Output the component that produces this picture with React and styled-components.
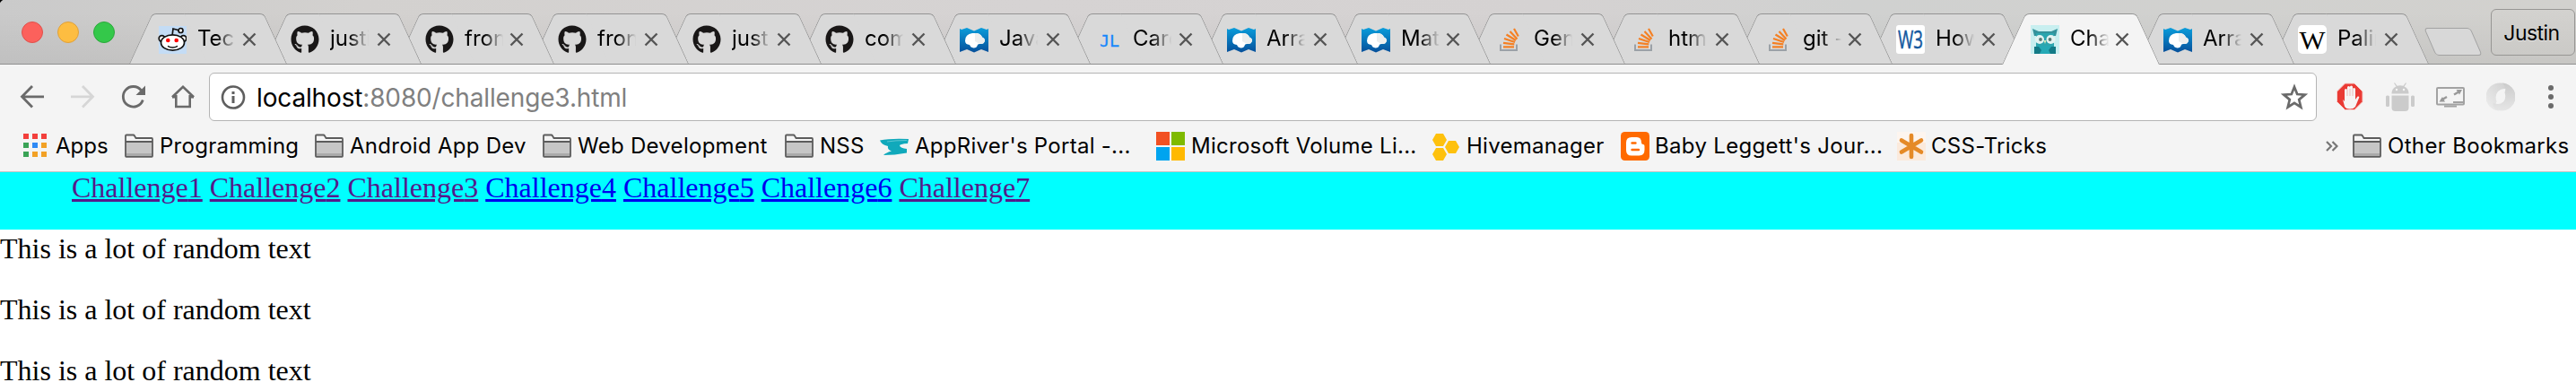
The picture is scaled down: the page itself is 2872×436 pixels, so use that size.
import React from 'react';
import styled, { createGlobalStyle, css } from 'styled-components';
import { FaGithub } from 'react-icons/fa';

const GlobalStyle = createGlobalStyle`
  * { box-sizing: border-box; }
  body { margin: 0; background: #fff; overflow: hidden; }
`;

const ui = "Inter, 'Liberation Sans', sans-serif";

const Window = styled.div`
  display: flex;
  flex-direction: column;
  width: 2872px;
  height: 436px;
  overflow: hidden;
  background: #fff;
  font-family: ${ui};
`;

/* ---------- tab strip ---------- */

const TabStrip = styled.header`
  display: flex;
  align-items: flex-end;
  height: 72px;
  isolation: isolate;
  border-bottom: 1px solid #8f8f8f;
  background:
    radial-gradient(circle at 6px 6px, transparent 6px, #000 7px) 0 0 / 6px 6px no-repeat,
    linear-gradient(to bottom, rgba(0, 0, 0, 0) 20%, rgba(0, 0, 0, 0.05)),
    linear-gradient(to right, #cacaca, #d3d1cf 14%, #d6d3d3 40%, #d5d2d2 60%, #d0d1d0 72%, #d2d1ce);
`;

const TrafficLights = styled.div`
  display: flex;
  gap: 16px;
  align-self: flex-start;
  padding: 24px 16px 0 24px;
`;

const Light = styled.span`
  width: 24px;
  height: 24px;
  border-radius: 50%;
  border: 1px solid ${(p) => p.$edge};
  background: ${(p) => p.$fill};
`;

const tabSide = css`
  content: '';
  position: absolute;
  z-index: -1;
  top: 0;
  bottom: 0;
  width: 88px;
  border-top: 1px solid #949494;
  background: ${(p) => (p.$active ? '#f4f4f4' : '#d9d9d9')};
`;

const Tab = styled.div`
  position: relative;
  flex: none;
  isolation: isolate;
  z-index: ${(p) => p.$order};
  width: 176px;
  height: ${(p) => (p.$active ? 57 : 56)}px;
  margin-left: ${(p) => p.$overlap}px;
  margin-bottom: ${(p) => (p.$active ? -1 : 0)}px;
  padding: 13px 0 0 ${(p) => p.$inset}px;
  color: #000;

  &::before {
    ${tabSide}
    left: 0;
    border-left: 1px solid #949494;
    border-top-left-radius: 5px;
    transform: skewX(-24.6deg);
    transform-origin: left bottom;
  }

  &::after {
    ${tabSide}
    right: 0;
    border-right: 1px solid #949494;
    border-top-right-radius: 5px;
    transform: skewX(24.6deg);
    transform-origin: right bottom;
  }
`;

const TabContent = styled.div`
  display: flex;
  height: 32px;
`;

const TabTitle = styled.span`
  width: 46px;
  height: 32px;
  margin: -1px 0 0 12px;
  overflow: hidden;
  white-space: nowrap;
  font-size: 24px;
  line-height: 32px;
  mask-image: linear-gradient(to right, #000 46%, transparent 94%);
`;

const CloseIcon = styled.svg`
  width: 16px;
  height: 16px;
  margin: 8px 0 0 ${(p) => 36 - p.$inset}px;
`;

const NewTab = styled.span`
  flex: none;
  align-self: flex-start;
  width: 52px;
  height: 31px;
  margin: 31px 0 0 1px;
  border: 1px solid #a2a2a2;
  border-radius: 4px;
  background: #d8d8d8;
  transform: skewX(23.5deg);
`;

const Profile = styled.button`
  flex: none;
  align-self: flex-start;
  width: 94px;
  height: 52px;
  margin: 10px 0 0 16px;
  padding: 2px 3px 0 0;
  border: 1px solid #979694;
  border-radius: 6px;
  background: linear-gradient(#d3d2cf, #cbcac7);
  color: #000;
  font: 23px/32px ${ui};
  letter-spacing: -0.55px;
  text-align: center;
  text-shadow: 0 1px 0 #e6e6e6;
`;

/* ---------- toolbar ---------- */

const Toolbar = styled.div`
  display: flex;
  align-items: center;
  height: 72px;
  padding: 0 12px 0 20px;
  background: #f4f4f4;
`;

const IconGroup = styled.div`
  display: flex;
  gap: 24px;
`;

const Glyph = styled.svg`
  display: block;
  flex: none;
  width: 32px;
  height: 32px;
`;

const Omnibox = styled.div`
  display: flex;
  align-items: center;
  flex: 1;
  height: 54px;
  margin: 0 21px 0 13px;
  padding: 0 8px 0 10px;
  border: 1px solid #b4b4b4;
  border-radius: 6px;
  background: #fff;
`;

const Url = styled.span`
  flex: 1;
  margin: 1px 0 0 10px;
  color: #808080;
  font-size: 28px;
  line-height: 36px;
  letter-spacing: -0.15px;
`;

const Host = styled.span`
  color: #000;
`;

/* ---------- bookmarks ---------- */

const BookmarkBar = styled.nav`
  display: flex;
  align-items: center;
  height: 48px;
  padding: 0 6px 9px 23px;
  border-bottom: 1px solid #c4c4c4;
  background: #f4f4f4;
`;

const Bookmark = styled.span`
  display: flex;
  align-items: center;
  flex: none;
  gap: ${(p) => p.$gap ?? 7}px;
  width: ${(p) => p.$width}px;
  color: #000;
  font-size: 24px;
  line-height: 32px;
  letter-spacing: ${(p) => p.$tracking ?? 0.27}px;
  white-space: nowrap;
`;

const Overflow = styled.svg`
  width: 14px;
  height: 12px;
  margin: 0 16px 0 auto;
`;

/* ---------- page ---------- */

const PageNav = styled.nav`
  display: flex;
  gap: 8px;
  height: 64px;
  padding-left: 80px;
  background: #0ff;
  font: 32px/35px 'Liberation Serif', serif;
`;

const PageLink = styled.a`
  color: ${(p) => (p.$visited ? '#551a8b' : '#0000ee')};
  text-decoration: underline;
`;

const PageBody = styled.main`
  display: flex;
  flex-direction: column;
  gap: 32px;
  padding-top: 3px;
  font: 32px/36px 'Liberation Serif', serif;
  color: #000;
`;

const Paragraph = styled.p`
  margin: 0;
`;

/* ---------- icons ---------- */

const Octocat = styled(FaGithub)`
  display: block;
  flex: none;
  width: 32px;
  height: 32px;
  color: #191717;
`;

const Reddit = () => (
  <Glyph viewBox="0 0 32 32">
    <rect x="1" y="1" width="31" height="31" fill="#c4dcf5" />
    <g stroke="#111" strokeWidth="1.7" fill="#fff">
      <path d="M16 12l1-8 7 2" fill="none" />
      <circle cx="25.5" cy="6" r="2.5" />
      <circle cx="4.5" cy="15" r="3.3" />
      <circle cx="28.5" cy="15" r="3.3" />
      <ellipse cx="16.5" cy="19.5" rx="13" ry="8.7" />
      <path d="M11 23.3q5.5 3.4 11 0" fill="none" strokeWidth="1.4" />
    </g>
    <circle cx="11.3" cy="17" r="2.3" fill="#f00" />
    <circle cx="20.7" cy="17" r="2.3" fill="#f00" />
  </Glyph>
);

const Mdn = () => (
  <Glyph viewBox="0 0 32 32">
    <defs>
      <linearGradient id="mdn" x1="0" y1="0" x2="0" y2="1">
        <stop offset="0" stopColor="#0a9ddb" />
        <stop offset="1" stopColor="#064f9a" />
      </linearGradient>
    </defs>
    <path d="M0 4l2 1 6-2 8 3.500L24 3l6 2 2-1v26l-8-3-8 3.500L8 27l-8 3z" fill="url(#mdn)" />
    <path d="M6 17.500q0-7.500 8-8.500h5q4.500.5 6 4.500 3 1 3 4-1 3.500-4.500 3.500-3-.3-3.500 1-1 3.500-4.500 3.500-3.500-.5-4.500-3.500-5-.5-5-4.500z" fill="#fff" />
    <path d="M17 9h2q4.500.5 6 4.500 3 1 3 4-1 3.500-4.500 3.500-3-.5-6.500-3z" fill="#eceeee" />
  </Glyph>
);

const StackOverflow = () => (
  <Glyph viewBox="0 0 32 32">
    <path d="M7 21.5V28h18v-6.500" fill="none" stroke="#9ba1a7" strokeWidth="2" />
    <g stroke="#f48024" strokeWidth="2.200">
      <path d="M10 24.300h12M10 19.800l12.300 1.500M11 15l12 4M13.500 10.500l10.500 6.500M17.500 7l8 8.500M22 4l4.800 8.500" />
    </g>
  </Glyph>
);

const Jl = () => (
  <Glyph viewBox="0 0 32 32">
    <text x="7" y="24" fill="#1787fb" stroke="#1787fb" strokeWidth="0.3" fontFamily="'DejaVu Sans Mono', monospace" fontSize="17" textLength="22" lengthAdjust="spacingAndGlyphs">JL</text>
  </Glyph>
);

const W3 = () => (
  <Glyph viewBox="0 0 32 32">
    <rect width="32" height="32" rx="3" fill="#fff" />
    <text x="2" y="26" fill="#1459a0" stroke="#1459a0" strokeWidth="0.5" fontFamily="'Open Sans', sans-serif" fontSize="28" fontWeight="400" textLength="28" lengthAdjust="spacingAndGlyphs">W3</text>
  </Glyph>
);

const Wikipedia = () => (
  <Glyph viewBox="0 0 32 32">
    <rect width="32" height="32" rx="5" fill="#fff" />
    <text x="1.500" y="26.500" fill="#000" fontFamily="'Liberation Serif', serif" fontSize="29" textLength="29" lengthAdjust="spacingAndGlyphs">W</text>
  </Glyph>
);

const Owl = () => (
  <Glyph viewBox="0 0 32 32">
    <rect width="32" height="32" fill="#c8eff0" />
    <path d="M2 4l7 3h14l7-3-2 8H4z" fill="#34929b" />
    <rect x="6" y="9" width="20" height="17" fill="#2ba5ae" />
    <circle cx="10" cy="16" r="5" fill="#e4f3f1" />
    <circle cx="22.500" cy="16" r="5" fill="#e4f3f1" />
    <circle cx="11" cy="16" r="1.900" fill="#587a76" />
    <circle cx="21.500" cy="16" r="1.900" fill="#587a76" />
    <path d="M14.500 17h3l-1.500 4z" fill="#d8e7b8" />
    <path d="M8 23h16v9H8z" fill="#25a9b5" />
    <path d="M4 24h5l3 4-2 4H4zM28 24h-5l-3 4 2 4h6z" fill="#137a86" />
  </Glyph>
);

const Folder = () => (
  <Glyph viewBox="0 0 32 32">
    <path d="M1 28V5.500Q1 4 2.500 4H10l3 3h16.500Q31 7 31 8.500V28z" fill="#f4f4f4" />
    <path d="M1 11h30v15.500q0 .5-.5.5h-29q-.5 0-.5-.5z" fill="#c6c6c6" />
    <path d="M2 24h28v3H2z" fill="#aaa" />
    <path d="M1 27V4.500q0-1 1-1h7.500q1 0 1.500 1l1.500 2.500H30q1 0 1 1V27q0 .8-.8.8H1.800Q1 27.800 1 27zM1 11h30" fill="none" stroke="#5c5c5c" strokeWidth="1.800" />
  </Glyph>
);

const appColors = ['#f33f3c', '#f33f3c', '#f33f3c', '#3aa356', '#2f8af5', '#f2a126', '#3aa356', '#f2a126', '#f2a126'];
const Apps = () => (
  <Glyph viewBox="0 0 32 32">
    {appColors.map((c, i) => (
      <rect key={i} x={3 + (i % 3) * 10} y={2 + Math.floor(i / 3) * 10} width="6" height="6" fill={c} />
    ))}
  </Glyph>
);

const AppRiver = () => (
  <Glyph viewBox="0 0 32 32">
    <path d="M0 9.500Q12 7 32 8l-1 5q-9 .5-9 2.500 1 2.500 8 3.500v4.500Q16 26 4 26q3-3 9-4.500-5-2-4-5.500-7-1.500-9-6.500z" fill="#10a9bb" />
    <path d="M8 11q9-1.500 22-1.500" stroke="#5fc6d2" fill="none" />
  </Glyph>
);

const Microsoft = () => (
  <Glyph viewBox="0 0 32 32">
    <path d="M0 0h15v15H0z" fill="#f25022" />
    <path d="M17 0h15v15H17z" fill="#7fba00" />
    <path d="M0 17h15v15H0z" fill="#00a4ef" />
    <path d="M17 17h15v15H17z" fill="#ffb900" />
  </Glyph>
);

const Hive = () => (
  <Glyph viewBox="0 0 32 32">
    <g fill="#fec10d">
      <path d="M6 2h8l4 7-4 7H6L2 9zM6 18h8l4 7-4 7H6l-4-7zM20 10h8l4 7-4 7h-8l-4-7z" />
    </g>
  </Glyph>
);

const Blogger = () => (
  <Glyph viewBox="0 0 32 32">
    <rect width="32" height="32" rx="4.500" fill="#ff6a00" />
    <path d="M12 6h6q5 0 5 6 0 2 2 2 1.500 0 1.500 2v4q0 6.500-6 6.500H12q-6 0-6-6v-8.500Q6 6 12 6z" fill="#fff" />
    <path d="M12.500 12.500h4M12.500 20h7.500" stroke="#ff6a00" strokeWidth="2.400" strokeLinecap="round" />
  </Glyph>
);

const CssTricks = () => (
  <Glyph viewBox="0 0 32 32">
    <rect width="32" height="32" fill="#fbeadc" />
    <path d="M0 0h32v12H0z" fill="#fdf5ef" />
    <path d="M16 4v24M5 9.500l22 13M27 9.500l-22 13" stroke="#e58a27" strokeWidth="4.600" strokeLinecap="round" />
  </Glyph>
);

const Back = ({ color }) => (
  <Glyph viewBox="0 0 32 32" fill="none" stroke={color} strokeWidth="2.800">
    <path d="M29 15.800H5M16 4L4.500 15.800 16 27.500" />
  </Glyph>
);

const Forward = ({ color }) => (
  <Glyph viewBox="0 0 32 32" fill="none" stroke={color} strokeWidth="2.800">
    <path d="M3 15.800h24M16 4l11.500 11.800L16 27.500" />
  </Glyph>
);

const Reload = () => (
  <Glyph viewBox="0 0 32 32">
    <path d="M25.500 8.800A11.300 11.300 0 1 0 27.300 19.500" fill="none" stroke="#6a6a6a" strokeWidth="2.800" />
    <path d="M30 3.500V14H19.500z" fill="#6a6a6a" />
  </Glyph>
);

const Home = () => (
  <Glyph viewBox="0 0 32 32" fill="none" stroke="#6a6a6a" strokeWidth="2.600">
    <path d="M4 16.200L16 4.800l12 11.400M8.300 14v13h15.400V14" />
    <path d="M4 16.300h4.300M23.700 16.300H28" />
  </Glyph>
);

const Info = () => (
  <Glyph viewBox="0 0 32 32">
    <circle cx="16" cy="16.500" r="12" fill="none" stroke="#5f5f5f" strokeWidth="2.600" />
    <path d="M14.500 15h3v8h-3zM14.500 10h3v3h-3z" fill="#5f5f5f" />
  </Glyph>
);

const Star = () => (
  <Glyph viewBox="0 0 32 32">
    <path d="M16 5l3.200 8 8.600.6-6.600 5.500 2.100 8.400L16 22.900l-7.300 4.600 2.100-8.400-6.600-5.500 8.600-.6z" fill="none" stroke="#6a6a6a" strokeWidth="2.700" />
  </Glyph>
);

const AdBlock = () => (
  <Glyph viewBox="0 0 32 32">
    <path d="M10.500 1h10.500l9 9v11.500l-9 9H10.500l-9-9V10z" fill="#ea3a34" stroke="#f7cfcc" />
    <path d="M8 19l2 2V8q1.500-2 3 0v7V5q1.500-2 3 0v10V4.500q1.500-2 3 0V15V7q1.500-2 3 0v12l2.500-3.500q2-.5 1.800 1L22 27q-2 2.500-6 2.500-5 0-6-3z" fill="#f6f4f4" />
    <path d="M13 8v7M16 7v8M19 7v8" stroke="#e9a19d" strokeWidth=".7" />
  </Glyph>
);

const Android = () => (
  <Glyph viewBox="0 0 32 32">
    <g fill="#cbcbcb">
      <path d="M6.500 12.500q0-6 5-8L9 .8l1-.5 2.500 3.500q3.500-1.200 7 0L22 .3l1 .5-2.500 3.700q5 2 5 8z" />
      <path d="M6.500 14.500h19V28q0 4-4 4h-11q-4 0-4-4z" />
      <rect y="14.500" width="4" height="12.500" rx="1.500" />
      <rect x="28" y="14.500" width="4" height="12.500" rx="1.500" />
    </g>
    <circle cx="12" cy="8" r="1.200" fill="#f4f4f4" />
    <circle cx="20" cy="8" r="1.200" fill="#f4f4f4" />
  </Glyph>
);

const Monitor = () => (
  <Glyph viewBox="0 0 32 32">
    <rect x="1" y="6" width="30" height="18.500" rx="1" fill="none" stroke="#a2a2a2" strokeWidth="2" />
    <path d="M9 26.500h14" stroke="#a2a2a2" strokeWidth="2" />
    <path d="M19 22h12" stroke="#a2a2a2" strokeWidth="2" />
    <path d="M20 13.500l6-3.500M12 16l-6 3.500" stroke="#999" strokeWidth="2.400" />
    <path d="M22.500 8H29l-3 5.500zM3.500 21.500h6.500L7 16z" fill="#999" />
  </Glyph>
);

const Swirl = () => (
  <Glyph viewBox="0 0 32 32">
    <defs>
      <linearGradient id="swirlA" x1="0" y1="1" x2="1" y2="0">
        <stop offset="0" stopColor="#eeeeee" />
        <stop offset="1" stopColor="#cfcfcf" />
      </linearGradient>
      <linearGradient id="swirlB" x1="0" y1="0" x2="0" y2="1">
        <stop offset="0" stopColor="#cbcbcb" />
        <stop offset="1" stopColor="#e6e6e6" />
      </linearGradient>
    </defs>
    <path d="M14 31.500A15.500 15.500 0 0 1 16 .5Q25 1 25 8 18 5 13 10 9 15 11.500 21 9 26 14 31.500z" fill="url(#swirlA)" />
    <path d="M18 .5A15.500 15.500 0 0 1 16 31.500Q7 31 7.500 22.500 14 26 19 21.500 22.500 17 20.500 11 23 6 18 .5z" fill="url(#swirlB)" />
    <ellipse cx="16" cy="16" rx="4.800" ry="6.300" fill="#f4f4f4" />
  </Glyph>
);

const Menu = () => (
  <Glyph viewBox="0 0 32 32" fill="#6a6a6a">
    <circle cx="16" cy="6" r="3" />
    <circle cx="16" cy="16" r="3" />
    <circle cx="16" cy="26" r="3" />
  </Glyph>
);

/* ---------- data ---------- */

const tabs = [
  { title: 'Tec', Icon: Reddit, step: 176, inset: 32 },
  { title: 'justi', Icon: Octocat, step: 150, inset: 30 },
  { title: 'fron', Icon: Octocat, step: 148, inset: 32 },
  { title: 'fron', Icon: Octocat, step: 150, inset: 30 },
  { title: 'just', Icon: Octocat, step: 148, inset: 32 },
  { title: 'com', Icon: Octocat, step: 150, inset: 30 },
  { title: 'Java', Icon: Mdn, step: 150, inset: 30 },
  { title: 'Card', Icon: Jl, step: 148, inset: 31 },
  { title: 'Arra', Icon: Mdn, step: 150, inset: 30 },
  { title: 'Mat', Icon: Mdn, step: 148, inset: 32 },
  { title: 'Gen', Icon: StackOverflow, step: 150, inset: 30 },
  { title: 'htm', Icon: StackOverflow, step: 150, inset: 30 },
  { title: 'git -', Icon: StackOverflow, step: 148, inset: 32 },
  { title: 'How', Icon: W3, step: 149, inset: 31 },
  { title: 'Cha', Icon: Owl, step: 149, inset: 32, active: true },
  { title: 'Arra', Icon: Mdn, step: 150, inset: 30 },
  { title: 'Palin', Icon: Wikipedia, step: 150, inset: 30 },
];

const bookmarks = [
  { label: 'Apps', Icon: Apps, width: 116, tracking: 0 },
  { label: 'Programming', Icon: Folder, width: 212 },
  { label: 'Android App Dev', Icon: Folder, width: 254 },
  { label: 'Web Development', Icon: Folder, width: 270 },
  { label: 'NSS', Icon: Folder, width: 106 },
  { label: "AppRiver's Portal -...", Icon: AppRiver, width: 308 },
  { label: 'Microsoft Volume Li...', Icon: Microsoft, width: 306 },
  { label: 'Hivemanager', Icon: Hive, width: 212, gap: 8 },
  { label: "Baby Leggett's Jour...", Icon: Blogger, width: 308, tracking: 0.33, gap: 6 },
  { label: 'CSS-Tricks', Icon: CssTricks, width: 180, gap: 6 },
];

const links = [true, true, true, false, false, false, true];

export default function App() {
  return (
    <Window>
      <GlobalStyle />
      <TabStrip>
        <TrafficLights>
          <Light $fill="#fc615c" $edge="#e0504b" />
          <Light $fill="#fdbd41" $edge="#dfa03a" />
          <Light $fill="#34c84a" $edge="#2aa93a" />
        </TrafficLights>
        {tabs.map(({ title, Icon, step, inset, active }, i) => (
          <Tab key={i} $order={active ? 50 : 30 - i} $active={active} $overlap={step - 176} $inset={inset}>
            <TabContent>
              <Icon />
              <TabTitle>{title}</TabTitle>
              <CloseIcon $inset={inset} viewBox="0 0 16 16">
                <path d="M1.500 1.500l13 13M14.500 1.500l-13 13" stroke="#555" strokeWidth="2.400" />
              </CloseIcon>
            </TabContent>
          </Tab>
        ))}
        <NewTab />
        <Profile>Justin</Profile>
      </TabStrip>

      <Toolbar>
        <IconGroup>
          <Back color="#6a6a6a" />
          <Forward color="#d6d6d6" />
          <Reload />
          <Home />
        </IconGroup>
        <Omnibox>
          <Info />
          <Url>
            <Host>localhost</Host>:8080/challenge3.html
          </Url>
          <Star />
        </Omnibox>
        <IconGroup>
          <AdBlock />
          <Android />
          <Monitor />
          <Swirl />
          <Menu />
        </IconGroup>
      </Toolbar>

      <BookmarkBar>
        {bookmarks.map(({ label, Icon, width, tracking, gap }) => (
          <Bookmark key={label} $width={width} $tracking={tracking} $gap={gap}>
            <Icon />
            {label}
          </Bookmark>
        ))}
        <Overflow viewBox="0 0 14 12">
          <path d="M1 1l5 5-5 5M7.500 1l5 5-5 5" fill="none" stroke="#777" strokeWidth="2.200" />
        </Overflow>
        <Bookmark $width={243} $tracking={0.33}>
          <Folder />
          Other Bookmarks
        </Bookmark>
      </BookmarkBar>

      <PageNav>
        {links.map((visited, i) => (
          <PageLink key={i} $visited={visited}>
            Challenge{i + 1}
          </PageLink>
        ))}
      </PageNav>
      <PageBody>
        <Paragraph>This is a lot of random text</Paragraph>
        <Paragraph>This is a lot of random text</Paragraph>
        <Paragraph>This is a lot of random text</Paragraph>
      </PageBody>
    </Window>
  );
}
